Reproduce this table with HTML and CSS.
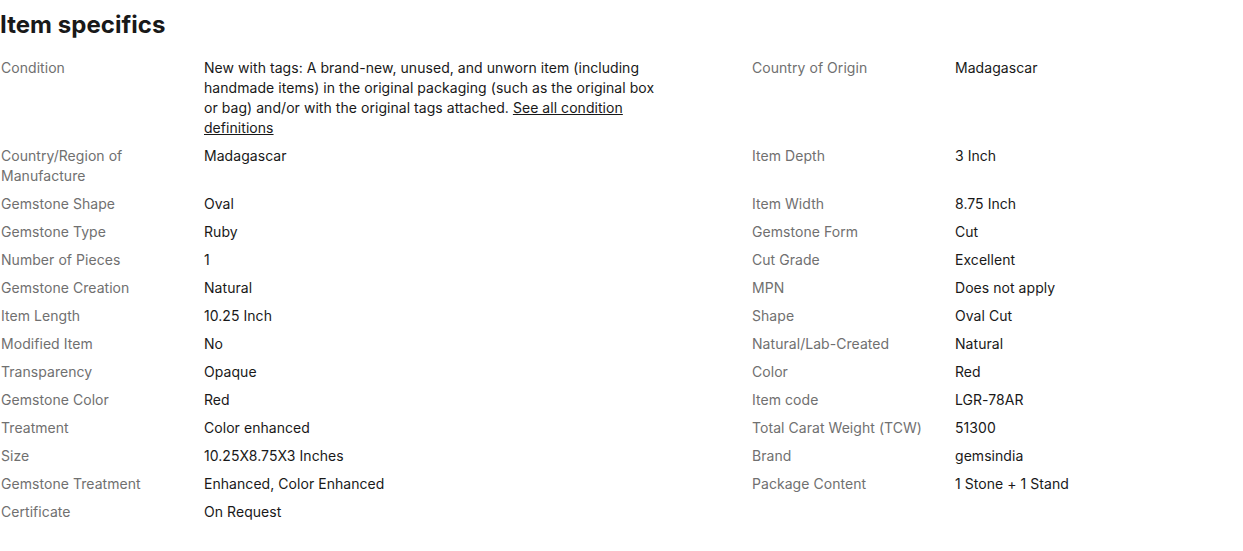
FILE: index.html
```html
<!DOCTYPE html>
<html lang="en">
<head>
    <meta charset="UTF-8">
    <title>Item specifics</title>
    <link rel="stylesheet" href="styles.css">
</head>
<body>
    <section class="specs">
        <h2 class="specs-title">Item specifics</h2>

        <div class="specs-grid">
            <div class="label">Condition</div>
            <div class="value value-wide">New with tags: A brand-new, unused, and unworn item (including handmade items) in the original packaging (such as the original box or bag) and/or with the original tags attached. <a href="#" class="link">See all condition definitions</a></div>
            <div class="label">Country of Origin</div>
            <div class="value">Madagascar</div>

            <div class="label">Country/Region of Manufacture</div>
            <div class="value">Madagascar</div>
            <div class="label">Item Depth</div>
            <div class="value">3 Inch</div>

            <div class="label">Gemstone Shape</div>
            <div class="value">Oval</div>
            <div class="label">Item Width</div>
            <div class="value">8.75 Inch</div>

            <div class="label">Gemstone Type</div>
            <div class="value">Ruby</div>
            <div class="label">Gemstone Form</div>
            <div class="value">Cut</div>

            <div class="label">Number of Pieces</div>
            <div class="value">1</div>
            <div class="label">Cut Grade</div>
            <div class="value">Excellent</div>

            <div class="label">Gemstone Creation</div>
            <div class="value">Natural</div>
            <div class="label">MPN</div>
            <div class="value">Does not apply</div>

            <div class="label">Item Length</div>
            <div class="value">10.25 Inch</div>
            <div class="label">Shape</div>
            <div class="value">Oval Cut</div>

            <div class="label">Modified Item</div>
            <div class="value">No</div>
            <div class="label">Natural/Lab-Created</div>
            <div class="value">Natural</div>

            <div class="label">Transparency</div>
            <div class="value">Opaque</div>
            <div class="label">Color</div>
            <div class="value">Red</div>

            <div class="label">Gemstone Color</div>
            <div class="value">Red</div>
            <div class="label">Item code</div>
            <div class="value">LGR-78AR</div>

            <div class="label">Treatment</div>
            <div class="value">Color enhanced</div>
            <div class="label">Total Carat Weight (TCW)</div>
            <div class="value">51300</div>

            <div class="label">Size</div>
            <div class="value">10.25X8.75X3 Inches</div>
            <div class="label">Brand</div>
            <div class="value">gemsindia</div>

            <div class="label">Gemstone Treatment</div>
            <div class="value">Enhanced, Color Enhanced</div>
            <div class="label">Package Content</div>
            <div class="value">1 Stone + 1 Stand</div>

            <div class="label">Certificate</div>
            <div class="value">On Request</div>
        </div>
    </section>
</body>
</html>
```

FILE: styles.css
```css
* {
    margin: 0;
    padding: 0;
    box-sizing: border-box;
}

body {
    font-family: Inter, 'Noto Sans', sans-serif;
    font-size: 14px;
    line-height: 20px;
    letter-spacing: 0.05px;
    color: #191919;
    background: #fff;
}

.specs {
    padding: 8px 0 0 1px;
}

.specs-title {
    font-size: 24px;
    line-height: 34px;
    font-weight: 700;
    margin-left: -1px;
    margin-bottom: 16px;
}

.specs-grid {
    display: grid;
    grid-template-columns: 203px 548px 203px 1fr;
    row-gap: 8px;
}

.label {
    color: #707070;
    padding-right: 16px;
}

.value-wide {
    max-width: 456px;
}

.link {
    color: #191919;
    text-decoration: underline;
}
```
